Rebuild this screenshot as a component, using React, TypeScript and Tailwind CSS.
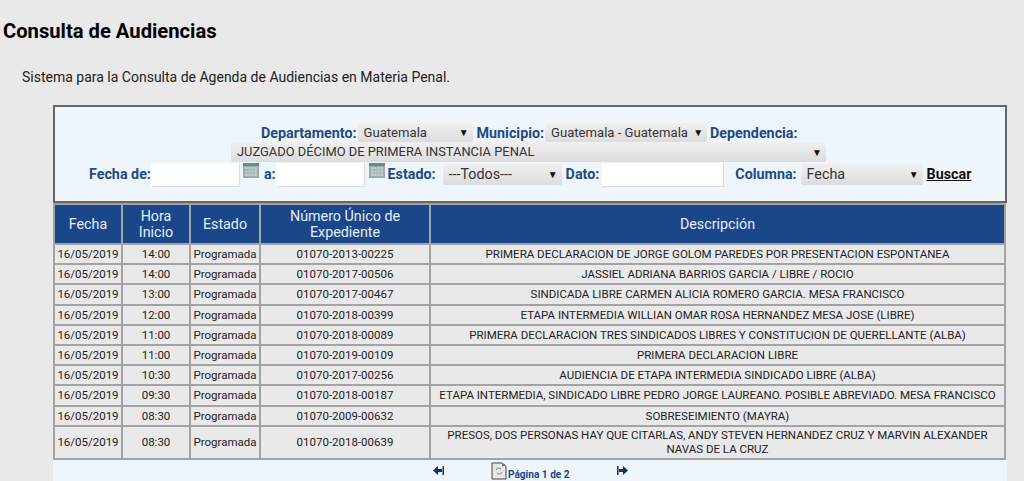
import React from "react";

const rows = [
  ["14:00", "01070-2013-00225", "PRIMERA DECLARACION DE JORGE GOLOM PAREDES POR PRESENTACION ESPONTANEA"],
  ["14:00", "01070-2017-00506", "JASSIEL ADRIANA BARRIOS GARCIA / LIBRE / ROCIO"],
  ["13:00", "01070-2017-00467", "SINDICADA LIBRE CARMEN ALICIA ROMERO GARCIA. MESA FRANCISCO"],
  ["12:00", "01070-2018-00399", "ETAPA INTERMEDIA WILLIAN OMAR ROSA HERNANDEZ MESA JOSE (LIBRE)"],
  ["11:00", "01070-2018-00089", "PRIMERA DECLARACION TRES SINDICADOS LIBRES Y CONSTITUCION DE QUERELLANTE (ALBA)"],
  ["11:00", "01070-2019-00109", "PRIMERA DECLARACION LIBRE"],
  ["10:30", "01070-2017-00256", "AUDIENCIA DE ETAPA INTERMEDIA SINDICADO LIBRE (ALBA)"],
  ["09:30", "01070-2018-00187", "ETAPA INTERMEDIA, SINDICADO LIBRE PEDRO JORGE LAUREANO. POSIBLE ABREVIADO. MESA FRANCISCO"],
  ["08:30", "01070-2009-00632", "SOBRESEIMIENTO (MAYRA)"],
  ["08:30", "01070-2018-00639", "PRESOS, DOS PERSONAS HAY QUE CITARLAS, ANDY STEVEN HERNANDEZ CRUZ Y MARVIN ALEXANDER NAVAS DE LA CRUZ"],
];

const Select = ({ label, className }: { label: string; className: string }) => (
  <div className={`flex items-center justify-between rounded-[2px] bg-gradient-to-b from-[#f0f0f0] to-[#dcdcdc] pl-[6px] pr-[4px] text-[#333] ${className}`}>
    <span className="whitespace-nowrap">{label}</span>
    <span className="text-[10px] text-[#111]">▼</span>
  </div>
);

const Calendar = ({ className }: { className: string }) => (
  <svg viewBox="0 0 16 15" className={`h-[15px] w-[16px] shrink-0 ${className}`}>
    <rect x="0" y="0" width="16" height="15" fill="#9aacac" />
    <rect x="0" y="0" width="16" height="3" fill="#6a8a8a" />
    <rect x="2" y="4" width="12" height="9" fill="#c3d0d0" />
    <path d="M2 7h12M2 10h12M5 4v9M8 4v9M11 4v9" stroke="#9aabab" strokeWidth="0.7" />
  </svg>
);

export default function App() {
  return (
    <div className="h-[481px] overflow-hidden bg-[#e9e9e9] font-['Roboto',sans-serif]">
      <h1 className="pl-[3px] pt-[19px] text-[20.2px] leading-[25px] font-bold text-black">Consulta de Audiencias</h1>
      <p className="pl-[22px] pt-[23px] text-[14px] leading-[20px] text-[#222]">
        Sistema para la Consulta de Agenda de Audiencias en Materia Penal.
      </p>

      <div className="mt-[18px] ml-[53px] w-[954px]">
        {/* Filtros */}
        <div className="h-[98px] border-2 border-[#666] bg-[#eef6fc] pt-[16px] text-[14.3px]">
          <div className="flex h-[19px] items-center justify-center pl-[3px] leading-[20px]">
            <b className="text-[#1f4a85]">Departamento:</b>
            <Select label="Guatemala" className="ml-[1px] h-[19px] w-[115px] text-[13.1px]" />
            <b className="ml-[4px] text-[#1f4a85]">Municipio:</b>
            <Select label="Guatemala - Guatemala" className="ml-[1px] h-[19px] w-[162px] text-[13.1px]" />
            <b className="ml-[3px] w-[92px] text-[#1f4a85]">Dependencia:</b>
          </div>
          <div className="flex h-[21px] justify-center pr-[3px]">
            <Select label="JUZGADO DÉCIMO DE PRIMERA INSTANCIA PENAL" className="h-[20px] w-[595px] text-[12.9px]" />
          </div>
          <div className="flex h-[23px] items-center pl-[34px]">
            <b className="text-[#1f4a85]">Fecha de:</b>
            <div className="h-[23px] w-[88px] bg-white shadow-[1px_1px_0_#ddd]" />
            <Calendar className="mb-[8px] ml-[4px]" />
            <b className="ml-[5px] text-[#1f4a85]">a:</b>
            <div className="h-[23px] w-[88px] bg-white shadow-[1px_1px_0_#ddd]" />
            <Calendar className="mb-[8px] ml-[5px]" />
            <b className="ml-[3px] text-[#1f4a85]">Estado:</b>
            <Select label="---Todos---" className="ml-[7px] h-[21px] w-[119px] text-[14.3px]" />
            <b className="ml-[4px] text-[#1f4a85]">Dato:</b>
            <div className="ml-[3px] h-[23px] w-[121px] bg-white shadow-[1px_1px_0_#ddd]" />
            <b className="ml-[12px] text-[#1f4a85]">Columna:</b>
            <Select label="Fecha" className="ml-[4px] h-[21px] w-[122px] text-[14.3px]" />
            <a className="ml-[4px] font-bold text-[#111] underline">Buscar</a>
          </div>
        </div>

        {/* Tabla */}
        <table className="w-[953px] table-fixed border-collapse text-center text-[11.5px] leading-[14px] text-[#222]">
          <colgroup>
            <col className="w-[68px]" />
            <col className="w-[68px]" />
            <col className="w-[70px]" />
            <col className="w-[170px]" />
            <col />
          </colgroup>
          <thead>
            <tr className="h-[40px] bg-[#1a468a] text-[14.3px] leading-[16px] font-normal text-[#e6eef8]">
              <th className="border-2 border-[#a3a3a3] font-normal">Fecha</th>
              <th className="border-2 border-[#a3a3a3] font-normal">Hora Inicio</th>
              <th className="border-2 border-[#a3a3a3] font-normal">Estado</th>
              <th className="border-2 border-[#a3a3a3] px-5 font-normal">Número Único de Expediente</th>
              <th className="border-2 border-[#a3a3a3] font-normal">Descripción</th>
            </tr>
          </thead>
          <tbody>
            {rows.map((r, i) => (
              <tr key={i} className={i === 9 ? "h-[33px]" : "h-[20.2px]"}>
                <td className="border-2 border-[#a3a3a3]">16/05/2019</td>
                <td className="border-2 border-[#a3a3a3]">{r[0]}</td>
                <td className="border-2 border-[#a3a3a3]">Programada</td>
                <td className="border-2 border-[#a3a3a3]">{r[1]}</td>
                <td className="border-2 border-[#a3a3a3] px-[6px]">{r[2]}</td>
              </tr>
            ))}
          </tbody>
        </table>

        {/* Paginador */}
        <div className="flex h-[22px] items-center bg-[#eef6fc] pl-[380px] text-[#1a468a]">
          <svg viewBox="0 0 11 9" className="h-[9px] w-[11px]">
            <path d="M0 4.5 5 0v3h4v3H5v3zM9.5 0H11v9H9.5z" fill="#13306e" />
          </svg>
          <svg viewBox="0 0 16 18" className="ml-[47px] h-[18px] w-[16px]">
            <path d="M1 1h10l4 3v13H1z" fill="#e8e8e8" stroke="#444" />
            <path d="M11 1v3h4" fill="#777" />
            <path d="M5 8a3 3 0 0 1 5-1M11 10a3 3 0 0 1-5 1" stroke="#8aa" strokeWidth="1.2" fill="none" />
          </svg>
          <span className="ml-[1px] mt-[8px] text-[10.1px] font-bold">Página 1 de 2</span>
          <svg viewBox="0 0 11 9" className="ml-[47px] h-[9px] w-[11px]">
            <path d="M11 4.5 6 0v3H2v3h4v3zM0 0h1.5v9H0z" fill="#13306e" />
          </svg>
        </div>
      </div>
    </div>
  );
}
